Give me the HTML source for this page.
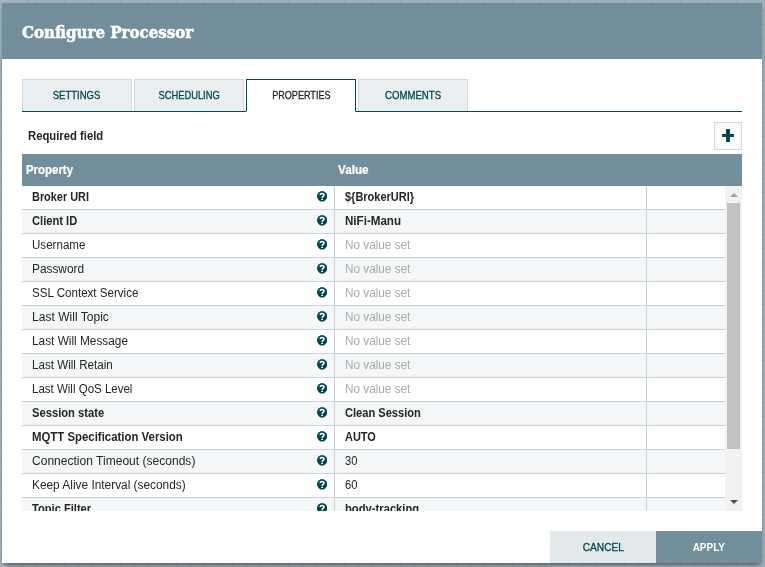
<!DOCTYPE html>
<html lang="en">
<head>
<meta charset="utf-8">
<title>Configure Processor</title>
<style>
html,body{margin:0;padding:0;}
body{width:765px;height:567px;overflow:hidden;position:relative;background-color:#a3b4be;background-image:linear-gradient(to right,rgba(60,85,100,.11) 1px,transparent 1px),linear-gradient(to bottom,rgba(60,85,100,.11) 1px,transparent 1px);background-size:14px 14px,14px 14px;background-position:8px 0,0 10px;font-family:"Liberation Sans",Arial,sans-serif;font-size:12px;color:#262626;}
#dialog{position:absolute;left:2px;top:3px;width:760px;height:560px;background:#fff;box-shadow:0 4px 5px -2px rgba(0,0,0,.5),0 0 3px rgba(0,0,0,.12);will-change:transform;}
#dlg-header{height:56px;background:#728e9b;}
#dlg-title{position:absolute;left:19.5px;top:.5px;height:56px;line-height:56px;color:#fff;font-family:"DejaVu Serif Condensed","DejaVu Serif","Liberation Serif",serif;font-stretch:condensed;font-weight:bold;font-size:17px;-webkit-text-stroke:.5px #fff;white-space:nowrap;transform-origin:0 50%;transform:scaleX(.985);}
#tabs{position:absolute;left:20px;top:76px;width:720px;height:32px;border-bottom:1px solid #004849;}
.tab{position:absolute;top:0;width:108px;height:31px;line-height:30px;text-align:center;background:#e9eef0;border:1px solid #d0dcdc;border-bottom:none;color:#004849;font-size:11px;-webkit-text-stroke:.3px;white-space:nowrap;}
.tab span{display:inline-block;transform-origin:50% 50%;}
.tab.sel{background:#fff;border:1px solid #004849;border-bottom:1px solid #fff;height:31px;color:#262626;}
#req{position:absolute;left:26px;top:125px;line-height:16px;font-size:12px;font-weight:bold;color:#262626;white-space:nowrap;transform-origin:0 50%;transform:scaleX(.94);}
#add{position:absolute;left:712px;top:119px;width:26px;height:26px;border:1px solid #cfdcdc;background:#fafbfb;}
#add i{position:absolute;background:#004849;border-radius:.8px;}
#thead{position:absolute;left:20px;top:151px;width:720px;height:32px;background:#728e9b;color:#fff;font-weight:bold;font-size:12px;line-height:32px;-webkit-text-stroke:.2px #fff;}
#thead span{position:absolute;top:0;white-space:nowrap;transform-origin:0 50%;}
#tbody{position:absolute;left:20px;top:183px;width:703px;height:325px;overflow:hidden;background:#fff;}
.row{position:relative;height:23px;border-bottom:1px solid #c7d2d7;line-height:22px;white-space:nowrap;}
.row.alt{background:#f4f6f7;}
.row .n,.row .v{position:absolute;top:0;display:inline-block;transform-origin:0 50%;}
.row .n{left:10px;}
.row .v{left:323px;}
.row .q{position:absolute;left:294.9px;top:5.4px;width:10.2px;height:10.7px;}
.row b.c1{position:absolute;left:312px;top:0;width:1px;height:24px;background:#c7d2d7;}
.row b.c2{position:absolute;left:624px;top:0;width:1px;height:24px;background:#c7d2d7;}
.r .n,.r .v{font-weight:bold;}
.u .v{color:#aaa;}
#sb{position:absolute;left:723px;top:183px;width:17px;height:325px;background:#f1f1f1;}
#sb .th{position:absolute;left:2px;top:17px;width:13px;height:246px;background:#c1c1c1;}
#sb .up{position:absolute;left:4.5px;top:7px;width:0;height:0;border-left:4px solid transparent;border-right:4px solid transparent;border-bottom:4px solid #a3a3a3;}
#sb .dn{position:absolute;left:4.5px;bottom:7px;width:0;height:0;border-left:4px solid transparent;border-right:4px solid transparent;border-top:4px solid #505050;}
.btn{position:absolute;top:528px;width:106px;height:32px;line-height:32px;text-align:center;font-size:11px;font-weight:bold;white-space:nowrap;}
.btn span{display:inline-block;transform-origin:50% 50%;}
#cancel{left:548px;background:#e3e8eb;color:#004849;font-weight:normal;-webkit-text-stroke:.3px;}
#apply{left:654px;background:#728e9b;color:#fff;}
</style>
</head>
<body>
<div style="position:absolute;left:0;top:0;width:28px;height:3px;background:#a5b6c0;border-right:1px solid #93a6b1"></div>
<div id="dialog">
  <div id="dlg-header"></div>
  <div id="dlg-title">Configure Processor</div>

  <div id="tabs">
    <div class="tab" style="left:0"><span style="transform:scaleX(.865)">SETTINGS</span></div>
    <div class="tab" style="left:112px"><span style="transform:scaleX(.85)">SCHEDULING</span></div>
    <div class="tab sel" style="left:224px"><span style="transform:scaleX(.825)">PROPERTIES</span></div>
    <div class="tab" style="left:336px"><span style="transform:scaleX(.872)">COMMENTS</span></div>
  </div>

  <div id="req">Required field</div>
  <div id="add"><i style="left:6.8px;top:10.8px;width:12.6px;height:3.4px"></i><i style="left:11.4px;top:6.2px;width:3.4px;height:12.6px"></i></div>

  <div id="thead"><span style="left:4px;transform:scaleX(.952)">Property</span><span style="left:316px;transform:scaleX(.976)">Value</span></div>

  <div id="tbody">
    <div class="row r"><span class="n" style="transform:scaleX(0.909)">Broker URI</span><svg class="q" viewBox="0 0 10 10" preserveAspectRatio="none"><use href="#qi"/></svg><b class="c1"></b><span class="v" style="transform:scaleX(0.915)">${BrokerURI}</span><b class="c2"></b></div>
    <div class="row alt r"><span class="n" style="transform:scaleX(0.93)">Client ID</span><svg class="q" viewBox="0 0 10 10" preserveAspectRatio="none"><use href="#qi"/></svg><b class="c1"></b><span class="v" style="transform:scaleX(0.966)">NiFi-Manu</span><b class="c2"></b></div>
    <div class="row u"><span class="n" style="transform:scaleX(0.965)">Username</span><svg class="q" viewBox="0 0 10 10" preserveAspectRatio="none"><use href="#qi"/></svg><b class="c1"></b><span class="v" style="transform:scaleX(0.98)">No value set</span><b class="c2"></b></div>
    <div class="row alt u"><span class="n" style="transform:scaleX(0.987)">Password</span><svg class="q" viewBox="0 0 10 10" preserveAspectRatio="none"><use href="#qi"/></svg><b class="c1"></b><span class="v" style="transform:scaleX(0.98)">No value set</span><b class="c2"></b></div>
    <div class="row u"><span class="n" style="transform:scaleX(0.965)">SSL Context Service</span><svg class="q" viewBox="0 0 10 10" preserveAspectRatio="none"><use href="#qi"/></svg><b class="c1"></b><span class="v" style="transform:scaleX(0.98)">No value set</span><b class="c2"></b></div>
    <div class="row alt u"><span class="n" style="transform:scaleX(1.005)">Last Will Topic</span><svg class="q" viewBox="0 0 10 10" preserveAspectRatio="none"><use href="#qi"/></svg><b class="c1"></b><span class="v" style="transform:scaleX(0.98)">No value set</span><b class="c2"></b></div>
    <div class="row u"><span class="n" style="transform:scaleX(0.986)">Last Will Message</span><svg class="q" viewBox="0 0 10 10" preserveAspectRatio="none"><use href="#qi"/></svg><b class="c1"></b><span class="v" style="transform:scaleX(0.98)">No value set</span><b class="c2"></b></div>
    <div class="row alt u"><span class="n" style="transform:scaleX(0.969)">Last Will Retain</span><svg class="q" viewBox="0 0 10 10" preserveAspectRatio="none"><use href="#qi"/></svg><b class="c1"></b><span class="v" style="transform:scaleX(0.98)">No value set</span><b class="c2"></b></div>
    <div class="row u"><span class="n" style="transform:scaleX(0.959)">Last Will QoS Level</span><svg class="q" viewBox="0 0 10 10" preserveAspectRatio="none"><use href="#qi"/></svg><b class="c1"></b><span class="v" style="transform:scaleX(0.98)">No value set</span><b class="c2"></b></div>
    <div class="row alt r"><span class="n" style="transform:scaleX(0.933)">Session state</span><svg class="q" viewBox="0 0 10 10" preserveAspectRatio="none"><use href="#qi"/></svg><b class="c1"></b><span class="v" style="transform:scaleX(0.924)">Clean Session</span><b class="c2"></b></div>
    <div class="row r"><span class="n" style="transform:scaleX(0.95)">MQTT Specification Version</span><svg class="q" viewBox="0 0 10 10" preserveAspectRatio="none"><use href="#qi"/></svg><b class="c1"></b><span class="v" style="transform:scaleX(0.912)">AUTO</span><b class="c2"></b></div>
    <div class="row alt"><span class="n" style="transform:scaleX(1.004)">Connection Timeout (seconds)</span><svg class="q" viewBox="0 0 10 10" preserveAspectRatio="none"><use href="#qi"/></svg><b class="c1"></b><span class="v" style="transform:scaleX(0.936)">30</span><b class="c2"></b></div>
    <div class="row"><span class="n" style="transform:scaleX(0.989)">Keep Alive Interval (seconds)</span><svg class="q" viewBox="0 0 10 10" preserveAspectRatio="none"><use href="#qi"/></svg><b class="c1"></b><span class="v" style="transform:scaleX(0.936)">60</span><b class="c2"></b></div>
    <div class="row alt r"><span class="n" style="transform:scaleX(0.927)">Topic Filter</span><svg class="q" viewBox="0 0 10 10" preserveAspectRatio="none"><use href="#qi"/></svg><b class="c1"></b><span class="v" style="transform:scaleX(0.935)">body-tracking</span><b class="c2"></b></div>
  </div>
  <div id="sb"><div class="up"></div><div class="th"></div><div class="dn"></div></div>

  <div class="btn" id="cancel"><span style="transform:scaleX(.925)">CANCEL</span></div>
  <div class="btn" id="apply"><span style="transform:scaleX(.908)">APPLY</span></div>
</div>

<svg width="0" height="0" style="position:absolute">
  <defs>
    <g id="qi">
      <circle cx="5" cy="5" r="5" fill="#004849"/>
      <path d="M3.2 3.8 C3.2 1.8 6.9 1.8 6.9 3.7 C6.9 5 5.05 4.9 5.05 6.3" fill="none" stroke="#fff" stroke-width="1.5"/>
      <rect x="4.3" y="7.1" width="1.5" height="1.4" fill="#fff"/>
    </g>
  </defs>
</svg>
</body>
</html>
